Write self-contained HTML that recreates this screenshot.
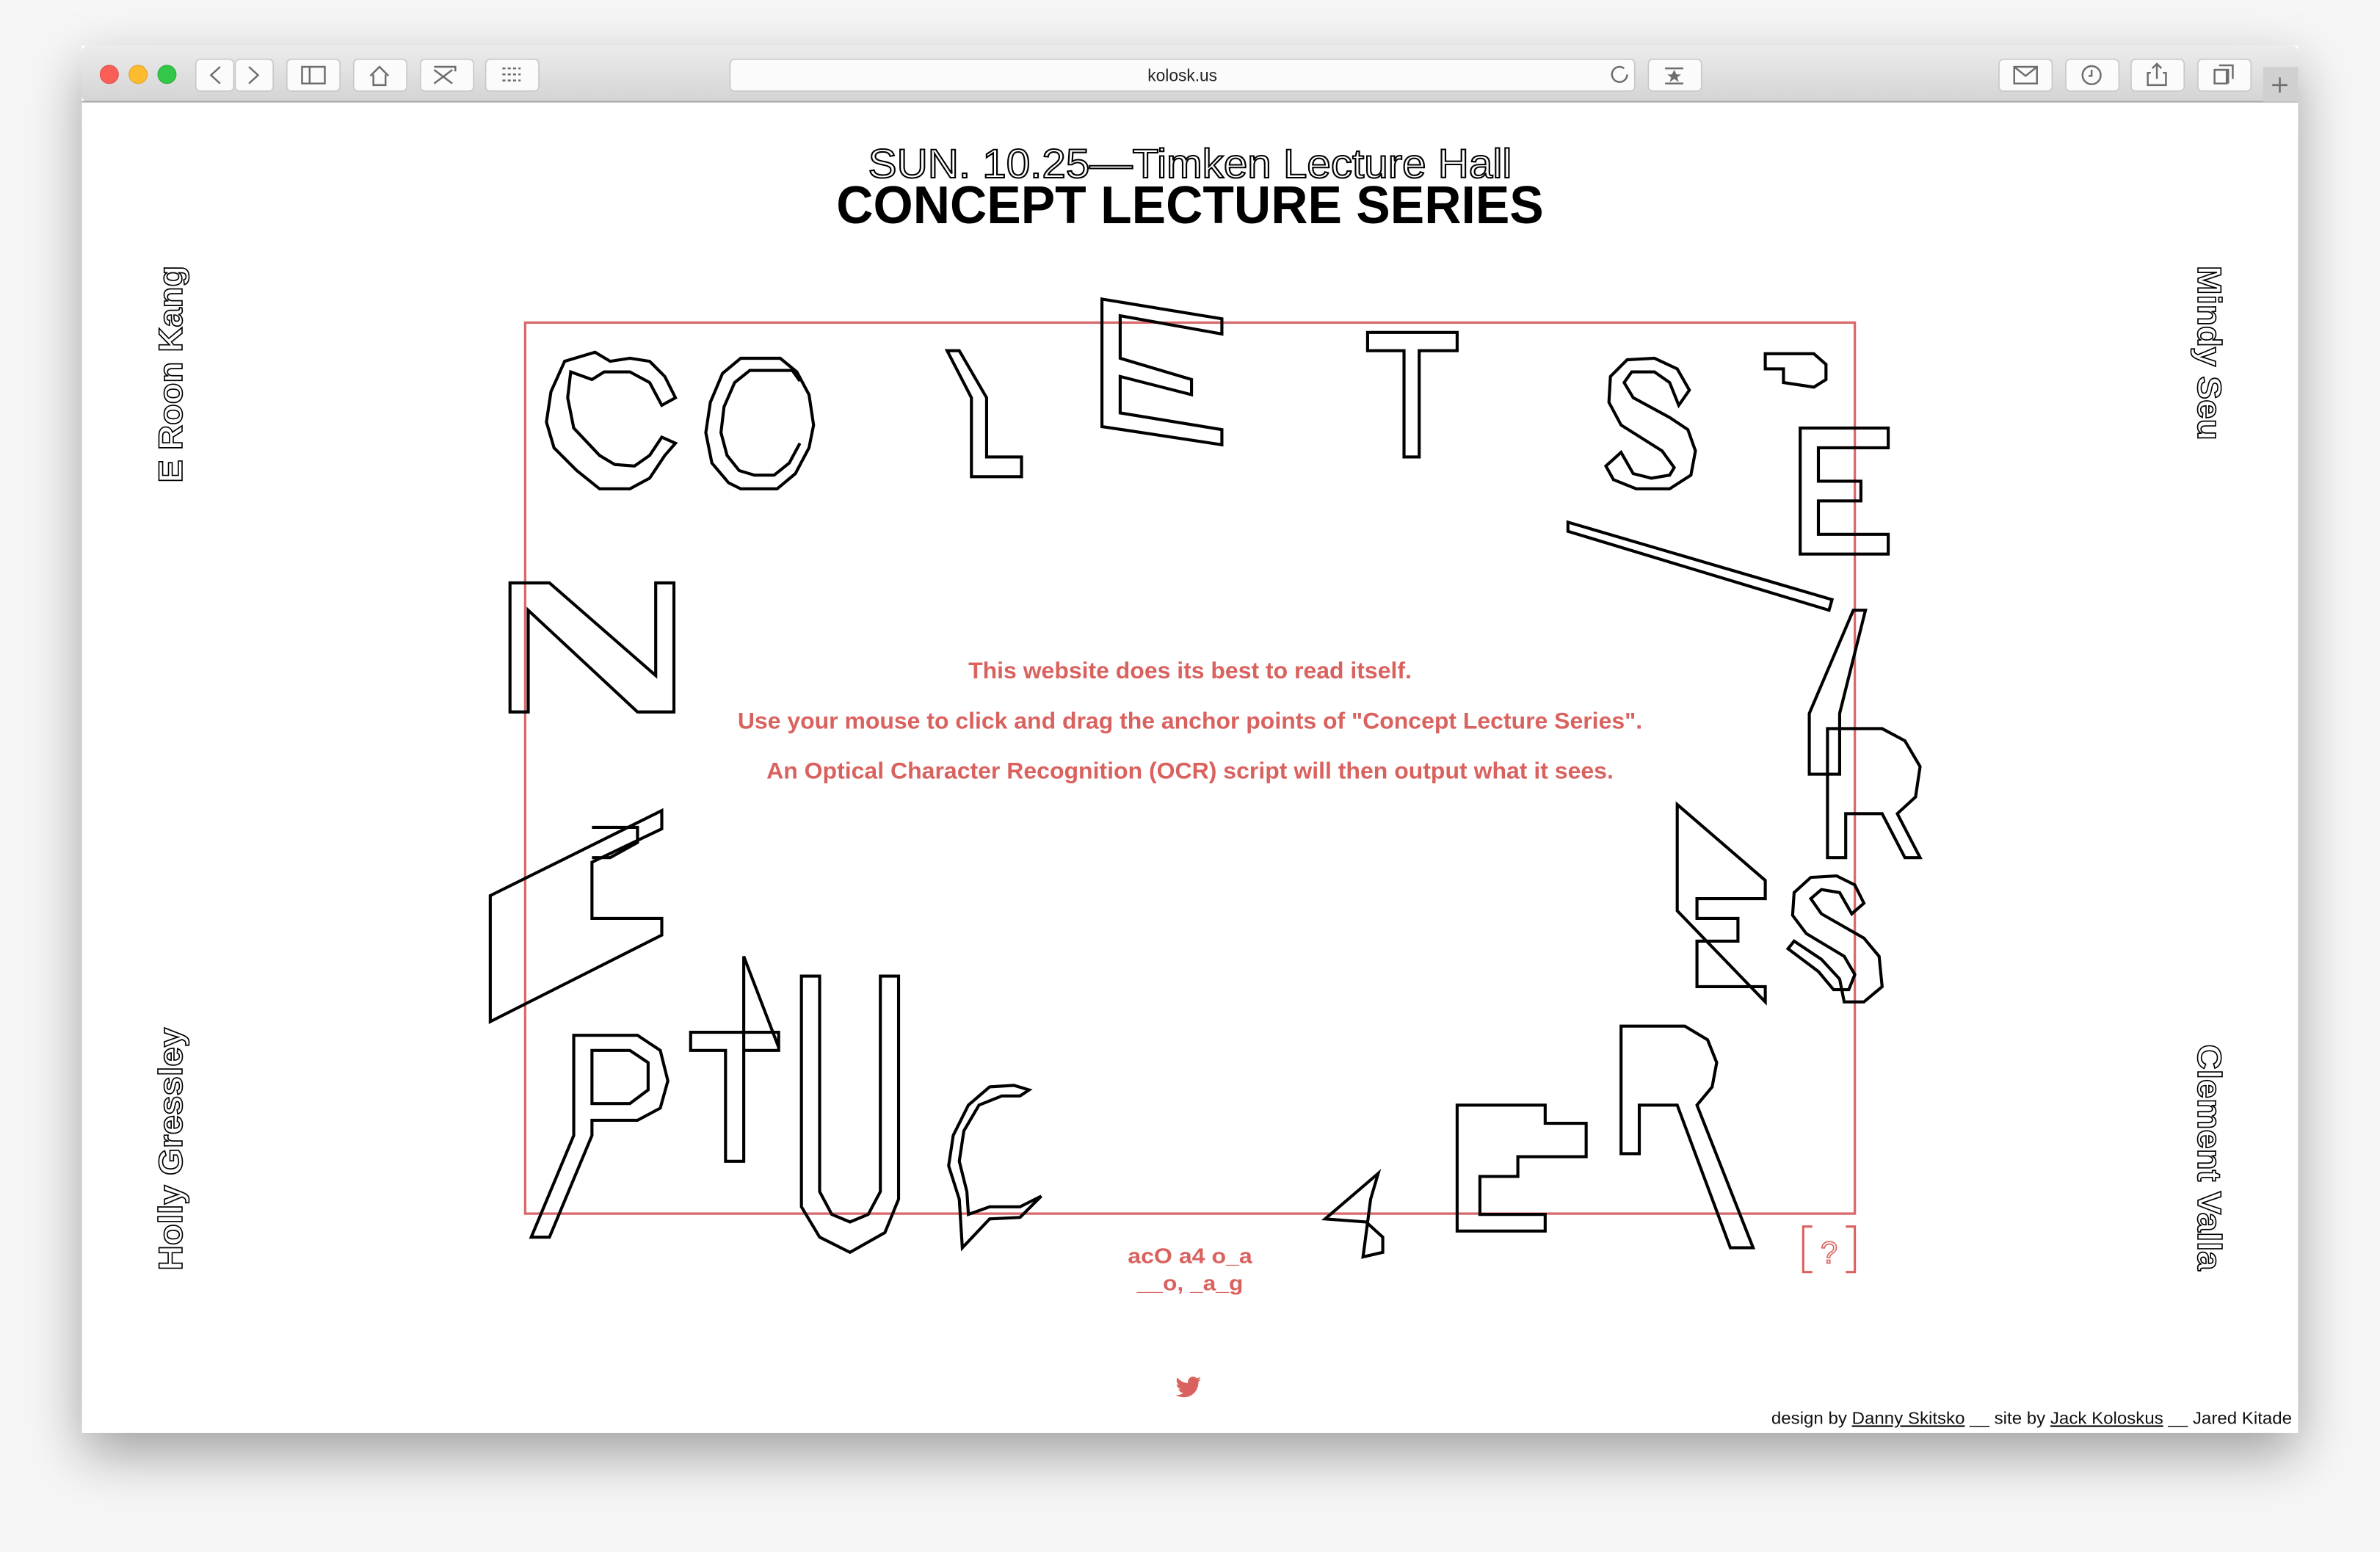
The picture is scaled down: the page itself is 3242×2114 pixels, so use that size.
<!DOCTYPE html>
<html><head><meta charset="utf-8"><style>
html,body{margin:0;padding:0;background:#f4f4f4;overflow:hidden}
svg{display:block}
</style></head><body>
<svg width="3242" height="2114" viewBox="0 0 1568 1022.4" xmlns="http://www.w3.org/2000/svg" font-family="Liberation Sans, sans-serif">
<defs>
<linearGradient id="tb" x1="0" y1="0" x2="0" y2="1"><stop offset="0" stop-color="#ececec"/><stop offset="1" stop-color="#d4d4d4"/></linearGradient>
<filter id="sh" x="-10%" y="-10%" width="120%" height="130%"><feDropShadow dx="0" dy="14" stdDeviation="18" flood-color="#000" flood-opacity="0.35"/></filter>
</defs>
<rect width="1568" height="1022.4" fill="#f6f6f6"/>
<rect x="54" y="30" width="1460" height="914" fill="#fff" filter="url(#sh)"/>
<rect x="54" y="30" width="1460" height="37" rx="4" fill="url(#tb)"/>
<line x1="54" y1="67" x2="1514" y2="67" stroke="#a9a9a9" stroke-width="1"/>
<circle cx="72" cy="49" r="6" fill="#fc5f57" stroke="#de4a42" stroke-width=".5"/>
<circle cx="91" cy="49" r="6" fill="#fdbc2e" stroke="#dea123" stroke-width=".5"/>
<circle cx="110" cy="49" r="6" fill="#33c748" stroke="#27aa36" stroke-width=".5"/>
<g fill="#fbfbfb" stroke="#c8c8c8" stroke-width=".8">
<rect x="129" y="39" width="25" height="21" rx="3"/><rect x="155" y="39" width="25" height="21" rx="3"/>
<rect x="189" y="39" width="35" height="21" rx="3"/><rect x="233" y="39" width="35" height="21" rx="3"/>
<rect x="277" y="39" width="35" height="21" rx="3"/><rect x="320" y="39" width="35" height="21" rx="3"/>
<rect x="481" y="39" width="596" height="21" rx="3"/><rect x="1086" y="39" width="35" height="21" rx="3"/>
<rect x="1317" y="39" width="35" height="21" rx="3"/><rect x="1361" y="39" width="35" height="21" rx="3"/>
<rect x="1404" y="39" width="35" height="21" rx="3"/><rect x="1448" y="39" width="35" height="21" rx="3"/>
</g>
<rect x="1491" y="44" width="23" height="23" fill="#d0d0d0"/>
<g fill="none" stroke="#6d6d6d" stroke-width="1.2">
<path d="M145,44 L139,49.5 L145,55"/><path d="M164,44 L170,49.5 L164,55"/>
<rect x="199" y="44" width="15" height="11"/><line x1="204" y1="44" x2="204" y2="55"/>
<path d="M244,50 L250,44 L256,50 M246,49 V56 H254 V49"/>
<path d="M286,44 h14 v3 M286,55 l12,-9 M286,46 l12,9"/>
<path d="M331,45h12M331,49h12M331,53h12" stroke-dasharray="2 1.5"/>
<path d="M1070,45 a5,5 0 1 0 2,4"/>
<path d="M1097,45h12M1097,55h12"/><path d="M1103,46 l1.5,3h3l-2.5,2 1,3-3-2-3,2 1-3-2.5-2h3z" fill="#6d6d6d" stroke="none"/>
<rect x="1327" y="44" width="15" height="11"/><path d="M1327,44 l7.5,6 7.5,-6"/>
<circle cx="1378" cy="49.5" r="6"/><path d="M1378,46v4h-2"/>
<path d="M1417,48h-2v8h12v-8h-2M1421,52V42M1418,45l3-3 3,3"/>
<path d="M1459,46h9v9M1462,43h9v9" /><rect x="1459" y="46" width="8" height="9"/>
<path d="M1502,51v10M1497,56h10"/>
</g>
<text x="779" y="53.5" font-size="11" text-anchor="middle" fill="#222">kolosk.us</text>

<text x="784" y="117" font-size="27" text-anchor="middle" fill="#fff" stroke="#000" stroke-width="1" textLength="424" lengthAdjust="spacingAndGlyphs">SUN. 10.25—Timken Lecture Hall</text>
<text x="784" y="147" font-size="35" font-weight="bold" text-anchor="middle" fill="#000" textLength="466" lengthAdjust="spacingAndGlyphs">CONCEPT LECTURE SERIES</text>

<rect x="346" y="212.5" width="876" height="587" fill="none" stroke="#d9696b" stroke-width="1.6"/>
<g fill="#d9625f" font-weight="bold" font-size="15" text-anchor="middle">
<text x="784" y="447" textLength="292" lengthAdjust="spacingAndGlyphs">This website does its best to read itself.</text>
<text x="784" y="480" textLength="596" lengthAdjust="spacingAndGlyphs">Use your mouse to click and drag the anchor points of "Concept Lecture Series".</text>
<text x="784" y="513" textLength="558" lengthAdjust="spacingAndGlyphs">An Optical Character Recognition (OCR) script will then output what it sees.</text>
<text x="784" y="832" font-size="14" textLength="82" lengthAdjust="spacingAndGlyphs">acO a4 o_a</text>
<text x="784" y="850" font-size="14" textLength="70" lengthAdjust="spacingAndGlyphs">__o, _a_g</text>
</g>
<g fill="none" stroke="#d9625f" stroke-width="1.5"><path d="M1194,808h-6v30h6M1216,808h6v30h-6"/></g>
<text x="1205" y="832" font-size="20" text-anchor="middle" fill="#fff" stroke="#d9625f" stroke-width=".8">?</text>
<path d="M791,907c-1,.5-2,.6-3,.7 1-.6 2-1.6 2-2.6-1,.6-2,1-3,1.2a4.6,4.6 0 0 0-7.8,4.2c-3.8-.2-7-2-9.3-4.8a4.6,4.6 0 0 0 1.4,6.2c-.8,0-1.5-.2-2-.6 0,2.2 1.6,4 3.6,4.5-.7.2-1.4.2-2,.1.6,1.8 2.3,3.2 4.3,3.2a9.3,9.3 0 0 1-6.8,1.9c2,1.3 4.5,2 7,2 8.5,0 13-7 13-13v-.6c.9-.6 1.6-1.4 2.2-2.3z" fill="#d9625f" transform="translate(784,913) scale(0.75) translate(-781,-913)"/>

<g font-size="22" font-weight="bold" fill="#fff" stroke="#000" stroke-width=".8">
<text transform="translate(120,318) rotate(-90)" textLength="143" lengthAdjust="spacingAndGlyphs">E Roon Kang</text>
<text transform="translate(120,837) rotate(-90)" textLength="160" lengthAdjust="spacingAndGlyphs">Holly Gressley</text>
<text transform="translate(1448,175) rotate(90)" textLength="115" lengthAdjust="spacingAndGlyphs">Mindy Seu</text>
<text transform="translate(1448,688) rotate(90)" textLength="149" lengthAdjust="spacingAndGlyphs">Clement Valla</text>
</g>
<text x="1510" y="938" font-size="11" text-anchor="end" fill="#111" textLength="343" lengthAdjust="spacingAndGlyphs">design by <tspan text-decoration="underline">Danny Skitsko</tspan> __ site by <tspan text-decoration="underline">Jack Koloskus</tspan> __ Jared Kitade</text>

<g fill="none" stroke="#000" stroke-width="2" stroke-linejoin="miter">
<path d="M445,262 L438,248 L428,238 L415,236 L402,238 L392,232 L372,238 L363,258 L360,278 L365,295 L380,310 L395,322 L415,322 L428,315 L438,300 L445,292 L436,288 L428,300 L418,307 L405,306 L395,300 L378,282 L374,262 L376,245 L390,250 L398,245 L415,245 L428,252 L436,267 Z"/>
<path d="M500,236 L488,236 L476,246 L468,265 L465,285 L469,305 L480,318 L488,322 L512,322 L524,312 L533,295 L536,280 L533,260 L525,245 L514,236 Z"/>
<path d="M527,251 L522,244 L508,244 L494,244 L484,252 L477,268 L475,285 L479,300 L487,310 L497,313 L510,313 L520,305 L527,292"/>
<path d="M624,231 L632,231 L650,262 L650,301 L673,301 L673,314 L640,314 L640,262 Z"/>
<path d="M726,197 L805,210 L805,220 L738,208 L738,236 L785,250 L785,260 L738,248 L738,272 L805,283 L805,293 L726,281 Z"/>
<path d="M901,219 L960,219 L960,231 L935,231 L935,301 L925,301 L925,231 L901,231 Z"/>
<path d="M1113,257 L1105,243 L1090,236 L1072,237 L1061,248 L1060,265 L1068,280 L1095,297 L1103,308 L1100,313 L1088,315 L1076,312 L1068,298 L1058,307 L1063,316 L1078,322 L1100,322 L1114,313 L1117,297 L1112,283 L1100,275 L1076,262 L1070,252 L1075,245 L1090,245 L1100,252 L1106,267 Z"/>
<path d="M1163,233 L1195,233 L1203,240 L1203,250 L1195,255 L1175,252 L1175,243 L1163,243 Z"/>
<path d="M1186,282 L1244,282 L1244,295 L1198,295 L1198,317 L1226,317 L1226,330 L1198,330 L1198,352 L1244,352 L1244,365 L1186,365 Z"/>
<path d="M1033,344 L1207,395 L1205,402 L1033,350 Z"/>
<path d="M1221,402 L1229,402 L1212,470 L1212,510 L1192,510 L1192,470 Z"/>
<path d="M1204,480 L1240,480 L1255,488 L1265,505 L1262,525 L1250,536 L1265,565 L1255,565 L1240,536 L1216,536 L1216,565 L1204,565 Z"/>
<path d="M1105,530 L1163,580 L1163,592 L1118,592 L1118,605 L1145,605 L1145,620 L1118,620 L1118,650 L1163,650 L1163,660 L1105,600 Z M1105,600 L1163,660"/>
<path d="M1228,595 L1222,583 L1210,577 L1193,578 L1182,588 L1181,603 L1190,615 L1215,630 L1222,642 L1218,652 L1208,652 L1198,640 L1178,625 L1182,620 L1200,632 L1212,645 L1215,660 L1228,660 L1240,650 L1238,630 L1228,618 L1200,602 L1193,592 L1200,586 L1212,588 L1220,602 Z"/>
<path d="M336,384 L362,384 L432,445 L432,384 L444,384 L444,469 L420,469 L348,402 L348,469 L336,469 Z"/>
<path d="M323,590 L436,534 L436,546 L390,568 L390,605 L436,605 L436,616 L323,673 Z M390,545 L420,545 L420,555 L402,565 L390,565"/>
<path d="M378,682 L420,682 L435,692 L440,712 L435,730 L420,738 L390,738 L390,748 L362,815 L350,815 L378,748 Z M390,692 L415,692 L427,700 L427,718 L415,727 L390,727 Z"/>
<path d="M455,680 L513,680 L513,692 L490,692 L490,765 L478,765 L478,692 L455,692 Z M490,692 L490,630 L513,690"/>
<path d="M528,643 L540,643 L540,785 L548,800 L560,805 L572,800 L580,785 L580,643 L592,643 L592,790 L583,812 L560,825 L540,815 L528,795 Z"/>
<path d="M678,718 L668,715 L652,716 L638,728 L628,748 L625,768 L632,790 L634,822 L652,803 L672,802 L686,788 L672,795 L652,795 L638,800 L637,785 L632,765 L635,745 L645,728 L660,722 L672,722 Z"/>
<path d="M908,773 L873,803 L900,805 L911,815 L911,825 L898,828 L903,790 Z"/>
<path d="M960,728 L1018,728 L1018,740 L1045,740 L1045,762 L1000,762 L1000,775 L975,775 L975,800 L1018,800 L1018,811 L960,811 Z"/>
<path d="M1068,676 L1110,676 L1125,685 L1131,700 L1128,716 L1118,728 L1155,822 L1140,822 L1105,728 L1080,728 L1080,760 L1068,760 Z"/>
</g>
</svg>
</body></html>
